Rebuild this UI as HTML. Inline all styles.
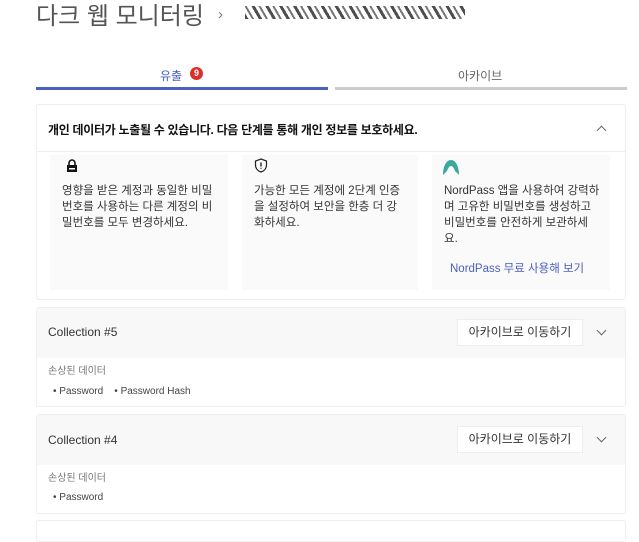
<!DOCTYPE html>
<html><head><meta charset="utf-8"><style>
body{margin:0;width:639px;height:523px;overflow:hidden;background:#fff;font-family:"Liberation Sans","Noto Sans CJK KR",sans-serif;color:#333;position:relative}
.a{position:absolute}
.card{position:absolute;left:36px;width:588px;border:1px solid #eee;border-radius:3px;background:#fff}
.sub{position:absolute;top:155px;height:135px;background:#fafafa}
.sub p{margin:0;position:absolute;top:28px;left:12px;font-size:11.5px;line-height:16px;color:#333;white-space:nowrap}
.hd{position:absolute;left:0;right:0;top:0;height:50px;background:#f8f8f8}
.btn{position:absolute;left:420px;top:11px;width:124px;height:25px;background:#fff;border:1px solid #eee;font-size:12px;line-height:25px;text-align:center;color:#333}
.chev{position:absolute;width:6px;height:6px;border-right:1.3px solid #666;border-bottom:1.3px solid #666}
</style></head><body>
<div class="a" style="left:36px;top:-4px;font-size:24px;color:#555">다크 웹 모니터링</div>
<div class="a" style="left:218px;top:6px;font-size:15px;color:#777">›</div>
<div class="a" style="left:245px;top:6px;width:220px;height:13px;background:repeating-linear-gradient(60deg,#222 0 3px,#fff 3px 6px,#555 6px 8px,#fff 8px 12px);opacity:.8"></div>
<div class="a" style="left:160px;top:67px;font-size:12px;color:#4a5fc1">유출</div>
<div class="a" style="left:190px;top:67px;width:13px;height:13px;border-radius:50%;background:#d9302c;color:#fff;font-size:9px;text-align:center;line-height:13px;font-weight:bold">9</div>
<div class="a" style="left:458px;top:67px;font-size:12px;color:#666">아카이브</div>
<div class="a" style="left:36px;top:87px;width:292px;height:3px;background:#4a5fc1"></div>
<div class="a" style="left:335px;top:87px;width:292px;height:3px;background:#ccc"></div>

<div class="card" style="top:104px;height:194px"></div>
<div class="a" style="left:48px;top:121px;font-size:12px;color:#111;font-weight:bold;letter-spacing:-0.3px">개인 데이터가 노출될 수 있습니다. 다음 단계를 통해 개인 정보를 보호하세요.</div>
<div class="chev" style="left:598px;top:127px;transform:rotate(-135deg)"></div>
<div class="a" style="left:37px;top:151px;width:588px;height:1px;background:#eee"></div>
<div class="sub" style="left:50px;width:178px"><svg class="a" style="left:16px;top:4px" width="12" height="13" viewBox="0 0 12 13"><path d="M3 6V4a3 3 0 0 1 6 0v2" fill="none" stroke="#111" stroke-width="1.6"/><rect x="1" y="6" width="10" height="7" fill="#111"/><rect x="3" y="9" width="6" height="1.5" fill="#fff"/></svg><p>영향을 받은 계정과 동일한 비밀<br>번호를 사용하는 다른 계정의 비<br>밀번호를 모두 변경하세요.</p></div>
<div class="sub" style="left:242px;width:176px"><svg class="a" style="left:12px;top:3px" width="14" height="15" viewBox="0 0 14 15"><path d="M7 1L12.5 3v4c0 3.5-2.5 6-5.5 7C4 13 1.5 10.5 1.5 7V3z" fill="none" stroke="#222" stroke-width="1.2"/><path d="M7 4.5v4M7 9.8v1" stroke="#222" stroke-width="1.4"/></svg><p>가능한 모든 계정에 2단계 인증<br>을 설정하여 보안을 한층 더 강<br>화하세요.</p></div>
<div class="sub" style="left:432px;width:178px"><svg class="a" style="left:10px;top:4px" width="18" height="16" viewBox="0 0 18 16"><path d="M1 16C1 7 4.5 1 9 1s8 6 8 15l-4-4c-1-3-2.5-5-4-5s-3 2-4 5z" fill="#3aa89a"/></svg><p>NordPass 앱을 사용하여 강력하<br>며 고유한 비밀번호를 생성하고<br>비밀번호를 안전하게 보관하세<br>요.</p><div class="a" style="left:18px;top:105px;font-size:11.5px;color:#4a5fc1">NordPass 무료 사용해 보기</div></div>

<div class="card" style="top:307px;height:98px"><div class="hd"></div>
<div class="a" style="left:11px;top:17px;font-size:12px">Collection #5</div>
<div class="btn">아카이브로 이동하기</div>
<div class="chev" style="left:561px;top:19px;transform:rotate(45deg)"></div>
<div class="a" style="left:11px;top:54px;font-size:10px;color:#777">손상된 데이터</div>
<div class="a" style="left:16px;top:78px;font-size:10px;color:#444">• Password &nbsp;&nbsp;&nbsp;• Password Hash</div></div>

<div class="card" style="top:414px;height:98px"><div class="hd"></div>
<div class="a" style="left:11px;top:18px;font-size:12px">Collection #4</div>
<div class="btn">아카이브로 이동하기</div>
<div class="chev" style="left:561px;top:19px;transform:rotate(45deg)"></div>
<div class="a" style="left:11px;top:54px;font-size:10px;color:#777">손상된 데이터</div>
<div class="a" style="left:16px;top:77px;font-size:10px;color:#444">• Password</div></div>
<div class="card" style="top:520px;height:20px"></div>
</body></html>
